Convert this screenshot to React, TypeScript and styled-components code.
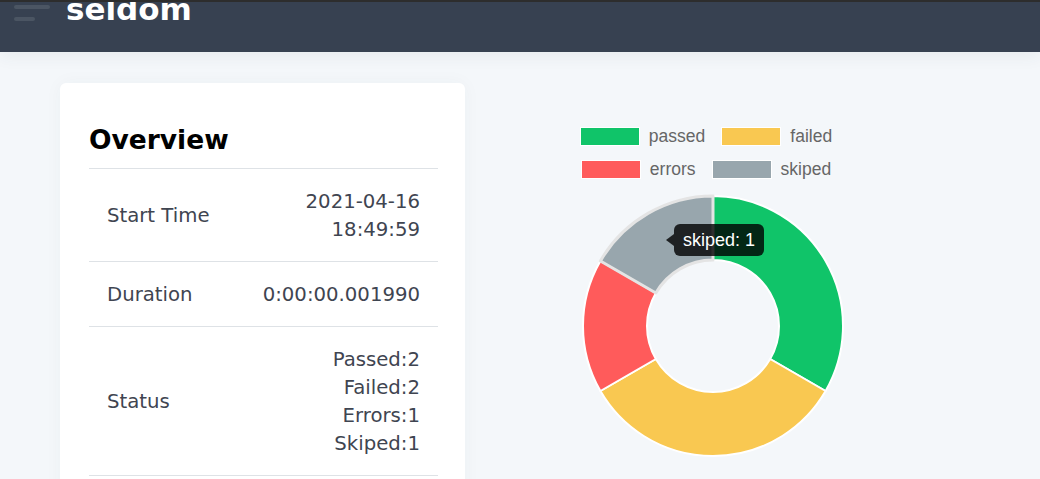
import React from "react";
import styled, { createGlobalStyle } from "styled-components";

const GlobalStyle = createGlobalStyle`
  body {
    margin: 0;
    background: #f4f7fa;
    overflow: hidden;
    font-family: "DejaVu Sans", Verdana, sans-serif;
  }
`;

const Topbar = styled.header`
  height: 50px;
  border-top: 2px solid #2d2d2d;
  background: #374151;
  display: flex;
  align-items: flex-start;
  gap: 16px;
  padding-left: 14px;
  overflow: hidden;
  position: relative;
  z-index: 1;
  box-shadow: 0 4px 16px rgba(55, 65, 81, 0.07);
`;

const Burger = styled.div`
  display: flex;
  flex-direction: column;
  gap: 8px;
  margin-top: 3px;
  width: 36px;
`;

const Bar = styled.span<{ $w: number }>`
  display: block;
  height: 4px;
  width: ${(p) => p.$w}px;
  border-radius: 2px;
  background: #4b5563;
`;

const Brand = styled.div`
  margin-top: -8px;
  font-size: 31px;
  line-height: 31px;
  font-weight: 700;
  color: #fff;
`;

const Main = styled.main`
  display: flex;
  align-items: flex-start;
  gap: 32px;
  padding: 31px 0 0 60px;
`;

const Card = styled.section`
  width: 405px;
  box-sizing: border-box;
  padding: 41px 27px 40px 29px;
  background: #fff;
  border-radius: 6px;
  box-shadow: 0 0 18px rgba(55, 65, 81, 0.04);
`;

const Title = styled.h3`
  margin: 0 0 12px 0;
  font-size: 26.5px;
  line-height: 1.2;
  font-weight: 700;
  color: #000;
`;

const Row = styled.div`
  display: flex;
  justify-content: space-between;
  align-items: center;
  padding: 19px 18px 17px;
  border-top: 1px solid #dee2e6;
  font-size: 19.7px;
  line-height: 28px;
  color: #3f4551;

  &:last-child {
    border-bottom: 1px solid #dee2e6;
  }
`;

const Value = styled.div`
  text-align: right;
`;

const ChartPanel = styled.div`
  width: 432px;
  display: flex;
  flex-direction: column;
  align-items: center;
  padding-top: 44px;
  font-family: "Liberation Sans", Arial, sans-serif;
`;

const Legend = styled.div`
  display: flex;
  flex-direction: column;
  align-items: center;
  gap: 14px;
  padding-right: 14px;
`;

const LegendRow = styled.div`
  display: flex;
  gap: 16px;
`;

const LegendItem = styled.div`
  display: flex;
  align-items: center;
  gap: 9px;
  font-size: 17.5px;
  line-height: 19px;
  color: #666;
`;

const Swatch = styled.span<{ $c: string }>`
  display: block;
  width: 58px;
  height: 17px;
  background: ${(p) => p.$c};
  border: 1px solid #fff;
`;

const Donut = styled.div`
  position: relative;
  width: 264px;
  height: 264px;
  margin-top: 15px;
`;

const Tooltip = styled.div`
  position: absolute;
  left: 93px;
  top: 30px;
  height: 32px;
  padding: 0 9px 0 9px;
  border-radius: 6px;
  background: rgba(0, 0, 0, 0.8);
  color: #fff;
  font-size: 18px;
  line-height: 32px;
  white-space: nowrap;

  &::before {
    content: "";
    position: absolute;
    left: -8px;
    top: 50%;
    transform: translateY(-50%);
    border-top: 6px solid transparent;
    border-bottom: 6px solid transparent;
    border-right: 8px solid rgba(0, 0, 0, 0.8);
  }
`;

const series = [
  { label: "passed", value: 2, color: "#10c469" },
  { label: "failed", value: 2, color: "#f9c851" },
  { label: "errors", value: 1, color: "#ff5b5b" },
  { label: "skiped", value: 1, color: "#98a6ad" },
];

const C = 132;
const R = 130;
const r = 66;

const pt = (deg: number, rad: number) => {
  const a = (deg * Math.PI) / 180;
  return `${(C + rad * Math.sin(a)).toFixed(2)} ${(C - rad * Math.cos(a)).toFixed(2)}`;
};

const arc = (from: number, to: number) => {
  const big = to - from > 180 ? 1 : 0;
  return `M ${pt(from, R)} A ${R} ${R} 0 ${big} 1 ${pt(to, R)} L ${pt(to, r)} A ${r} ${r} 0 ${big} 0 ${pt(from, r)} Z`;
};

const total = series.reduce((s, d) => s + d.value, 0);
let acc = 0;
const slices = series.map((d) => {
  const from = (acc / total) * 360;
  acc += d.value;
  return { ...d, from, to: (acc / total) * 360 };
});

const rows = [
  { label: "Start Time", lines: ["2021-04-16", "18:49:59"] },
  { label: "Duration", lines: ["0:00:00.001990"] },
  { label: "Status", lines: ["Passed:2", "Failed:2", "Errors:1", "Skiped:1"] },
];

export default function App() {
  return (
    <>
      <GlobalStyle />
      <Topbar>
        <Burger>
          <Bar $w={36} />
          <Bar $w={21} />
        </Burger>
        <Brand>seldom</Brand>
      </Topbar>
      <Main>
        <Card>
          <Title>Overview</Title>
          {rows.map((row) => (
            <Row key={row.label}>
              <span>{row.label}</span>
              <Value>
                {row.lines.map((l, i) => (
                  <React.Fragment key={l}>
                    {i > 0 && <br />}
                    {l}
                  </React.Fragment>
                ))}
              </Value>
            </Row>
          ))}
        </Card>
        <ChartPanel>
          <Legend>
            {[series.slice(0, 2), series.slice(2)].map((group, gi) => (
              <LegendRow key={gi}>
                {group.map((d) => (
                  <LegendItem key={d.label}>
                    <Swatch $c={d.color} />
                    {d.label}
                  </LegendItem>
                ))}
              </LegendRow>
            ))}
          </Legend>
          <Donut>
            <svg width="264" height="264" viewBox="0 0 264 264">
              {slices.map((s) => (
                <path
                  key={s.label}
                  d={arc(s.from, s.to)}
                  fill={s.color}
                  stroke={s.label === "skiped" ? "#e4e4e4" : "#fff"}
                  strokeWidth={s.label === "skiped" ? 3 : 2}
                  strokeLinejoin="round"
                />
              ))}
            </svg>
            <Tooltip>skiped: 1</Tooltip>
          </Donut>
        </ChartPanel>
      </Main>
    </>
  );
}
